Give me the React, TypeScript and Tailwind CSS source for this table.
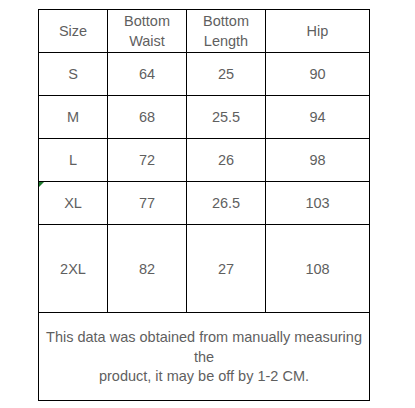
const header = [
  { label: ["Size"] },
  { label: ["Bottom", "Waist"] },
  { label: ["Bottom", "Length"] },
  { label: ["Hip"] },
];

const rows = [
  { size: "S", waist: "64", length: "25", hip: "90", tall: false },
  { size: "M", waist: "68", length: "25.5", hip: "94", tall: false },
  { size: "L", waist: "72", length: "26", hip: "98", tall: false },
  { size: "XL", waist: "77", length: "26.5", hip: "103", tall: false },
  { size: "2XL", waist: "82", length: "27", hip: "108", tall: true },
];

const cell =
  "flex items-center justify-center text-center border-r border-b border-black";

export default function App() {
  return (
    <div
      className="w-[415px] h-[408px] bg-white overflow-hidden text-[#5f5f5f] text-[14.5px] leading-[20px]"
      style={{ fontFamily: '"Liberation Sans", Arial, sans-serif' }}
    >
      <div className="relative ml-[38px] mt-[9px] w-[332px] border-l border-t border-black grid grid-cols-[69px_79px_79px_104px]">
        {header.map((h, i) => (
          <div key={i} className={`${cell} h-[43px]`}>
            <div>
              {h.label.map((l, j) => (
                <div key={j}>{l}</div>
              ))}
            </div>
          </div>
        ))}

        {rows.map((r) => {
          const h = r.tall ? "h-[88px]" : "h-[43px]";
          return [r.size, r.waist, r.length, r.hip].map((v, i) => (
            <div key={r.size + i} className={`${cell} ${h}`}>
              {v}
            </div>
          ));
        })}

        <div className={`${cell} col-span-4 h-[88px] pt-[2px]`}>
          <div className="leading-[19.5px]">
            This data was obtained from manually measuring
            <br />
            the
            <br />
            product, it may be off by 1-2 CM.
          </div>
        </div>

        {/* little green marker on the XL row */}
        <div className="absolute left-0 top-[172px] w-0 h-0 border-t-[5px] border-t-[#1f7a2e] border-r-[5px] border-r-transparent" />
      </div>
    </div>
  );
}
